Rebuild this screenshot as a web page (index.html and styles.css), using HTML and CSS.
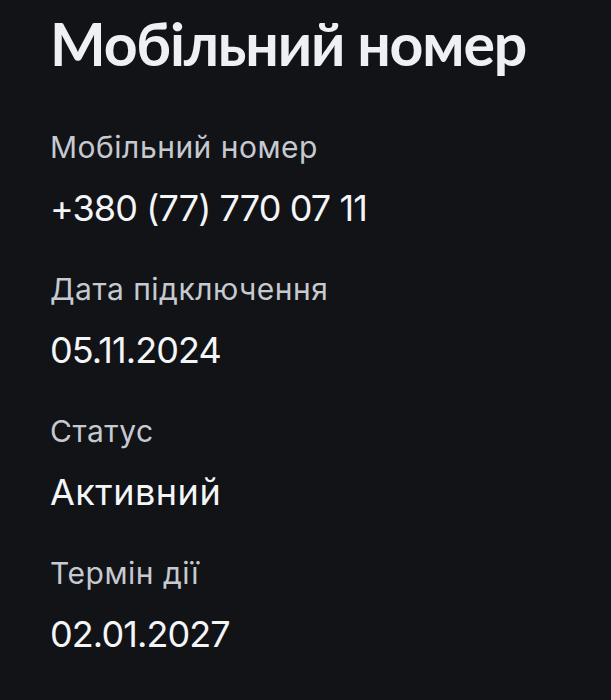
FILE: index.html
```html
<!DOCTYPE html>
<html lang="uk">
<head>
<meta charset="utf-8">
<title>Мобільний номер</title>
<link rel="stylesheet" href="styles.css">
</head>
<body>
<main class="page">
  <h1 class="title">Мобільний номер</h1>
  <dl class="fields">
    <div class="field">
      <dt class="label">Мобільний номер</dt>
      <dd class="value value-num">+380 (77) 770 07 11</dd>
    </div>
    <div class="field">
      <dt class="label">Дата підключення</dt>
      <dd class="value value-num">05.11.2024</dd>
    </div>
    <div class="field">
      <dt class="label">Статус</dt>
      <dd class="value">Активний</dd>
    </div>
    <div class="field">
      <dt class="label">Термін дії</dt>
      <dd class="value value-num">02.01.2027</dd>
    </div>
  </dl>
</main>
</body>
</html>
```
FILE: styles.css
```css
html, body {
  margin: 0;
  padding: 0;
  background: #111317;
}
body {
  font-family: Inter, "Noto Sans", sans-serif;
  width: 611px;
  height: 700px;
  overflow: hidden;
}
.page {
  padding: 9px 0 0 50px;
}
.title {
  margin: 0;
  font-family: Lato, Inter, sans-serif;
  font-size: 59px;
  line-height: 70px;
  font-weight: 700;
  letter-spacing: -1.2px;
  color: #eef0f3;
}
.fields {
  margin: 50px 0 0;
  display: flex;
  flex-direction: column;
  gap: 41px;
}
.field {
  display: flex;
  flex-direction: column;
  gap: 21px;
}
.label {
  margin: 0;
  font-size: 30px;
  line-height: 36px;
  letter-spacing: 0.5px;
  color: #c6cad0;
}
.value {
  margin: 0;
  font-size: 36px;
  line-height: 44px;
  letter-spacing: 0.5px;
  color: #f4f5f7;
}
.value-num {
  letter-spacing: -0.9px;
}
```
